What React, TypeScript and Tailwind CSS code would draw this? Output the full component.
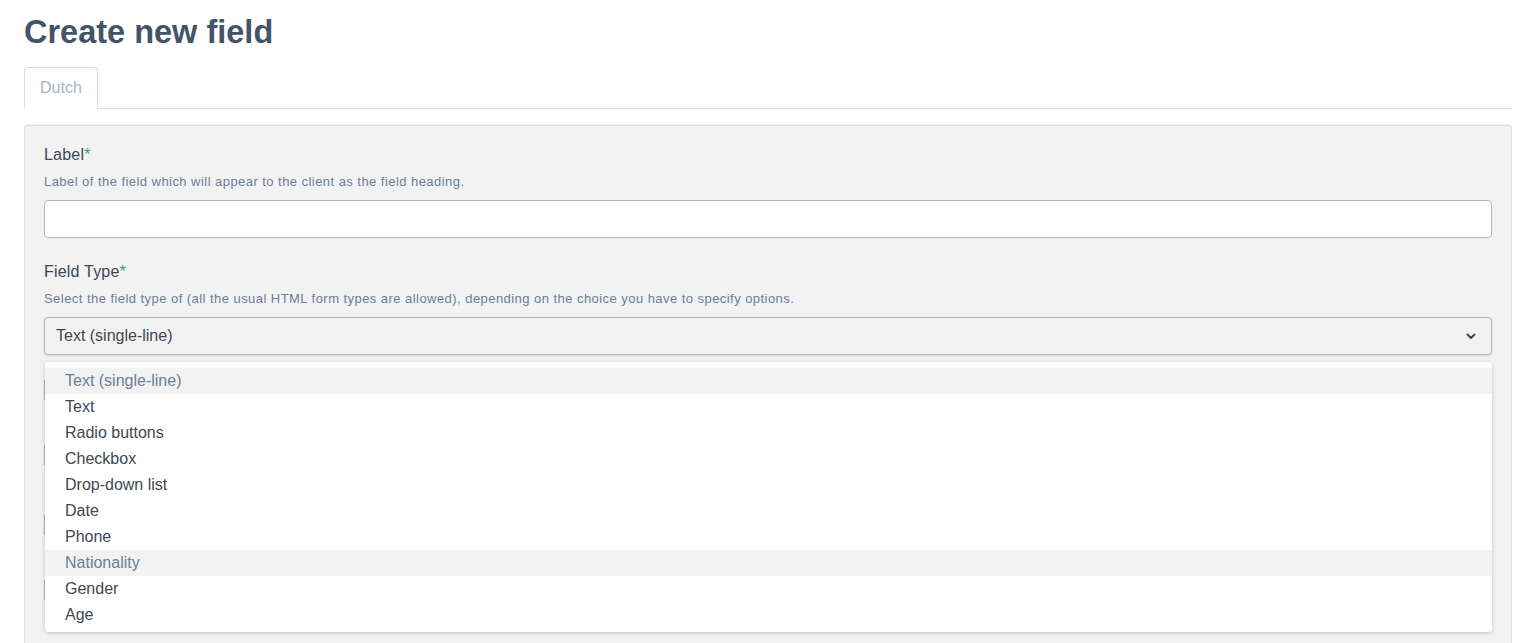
import { useState } from 'react';

const options = [
  'Text (single-line)',
  'Text',
  'Radio buttons',
  'Checkbox',
  'Drop-down list',
  'Date',
  'Phone',
  'Nationality',
  'Gender',
  'Age',
];

function Chevron() {
  return (
    <svg width="10" height="7" viewBox="0 0 10 7" fill="none">
      <path d="M1.5 1.5 5 5l3.5-3.5" stroke="#3d4852" strokeWidth="2" strokeLinecap="round" strokeLinejoin="round" />
    </svg>
  );
}

export default function App() {
  const [value] = useState('Text (single-line)');
  const hovered = 'Nationality';

  return (
    <div className="h-[643px] overflow-hidden bg-white pl-[24px] pr-[21px] pt-[13px] font-['Liberation_Sans',Arial,sans-serif] text-[#3d4852]">
      <h1 className="text-[32.5px] font-bold leading-[38px] text-[#435466]">Create new field</h1>

      <div className="mt-[16px] flex border-b border-[#d9dde2]">
        <div className="-mb-px rounded-t-[4px] border border-b-white border-[#d9dde2] bg-white px-[15px] py-[11px] text-[16px] leading-[18px] text-[#a7b4c8]">
          Dutch
        </div>
      </div>

      <div className="mt-[16px] h-[600px] rounded-t-[3px] border border-[#dedede] bg-[#f2f2f2] px-[19px] pt-[19px] shadow-[0_-1px_1px_rgba(0,0,0,0.04)]">
        <div className="text-[16px] font-medium leading-[20px] tracking-[0.2px] text-[#3a4756]">
          Label<span className="text-[#38a169]">*</span>
        </div>
        <div className="mt-[9px] text-[13px] leading-[16px] tracking-[0.45px] text-[#6b7f99]">
          Label of the field which will appear to the client as the field heading.
        </div>
        <input
          type="text"
          className="mt-[10px] block h-[38px] w-full rounded-[4px] border border-[#a9b7cb] bg-white px-[11px] text-[16px] outline-none"
        />

        <div className="mt-[24px] text-[16px] font-medium leading-[20px] tracking-[0.2px] text-[#3a4756]">
          Field Type<span className="text-[#38a169]">*</span>
        </div>
        <div className="mt-[9px] text-[13px] leading-[16px] tracking-[0.45px] text-[#6b7f99]">
          Select the field type of (all the usual HTML form types are allowed), depending on the choice you have to specify options.
        </div>

        <div className="relative">
          <div className="mt-[10px] flex h-[38px] w-full items-center justify-between rounded-[4px] border border-[#a9b7cb] bg-[#f2f2f2] pl-[11px] pr-[15px] text-[16px] text-[#3d4852] shadow-[0_1px_2px_rgba(0,0,0,0.12)]">
            <span>{value}</span>
            <Chevron />
          </div>

          <div className="pt-[25px]">
            <div className="h-[20px] w-[40px] border-l border-[#a9b7cb]" />
            <div className="mt-[45px] h-[20px] w-[40px] border-l border-[#a9b7cb]" />
            <div className="mt-[50px] h-[20px] w-[40px] border-l border-[#a9b7cb]" />
            <div className="mt-[45px] h-[20px] w-[40px] border-l border-[#a9b7cb]" />
          </div>

          <ul className="absolute left-[1px] right-0 top-[45px] rounded-[3px] bg-white pt-[6px] pb-[4px] shadow-[0_1px_4px_rgba(0,0,0,0.2)]">
            {options.map((o) => {
              const active = o === value || o === hovered;
              return (
                <li
                  key={o}
                  className={
                    active
                      ? 'h-[26px] bg-[#f2f2f2] pl-[20px] text-[16px] leading-[26px] text-[#6b7f99]'
                      : 'h-[26px] pl-[20px] text-[16px] leading-[26px] text-[#3d4852]'
                  }
                >
                  {o}
                </li>
              );
            })}
          </ul>
        </div>
      </div>
    </div>
  );
}
